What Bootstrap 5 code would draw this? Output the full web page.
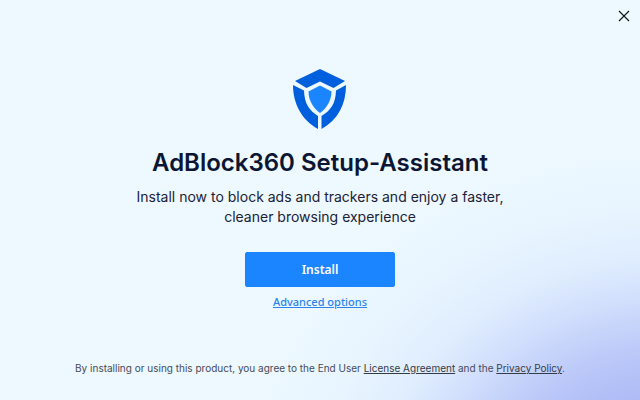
<!DOCTYPE html>
<html lang="en">
<head>
<meta charset="utf-8">
<meta name="viewport" content="width=device-width, initial-scale=1">
<title>AdBlock360 Setup-Assistant</title>
<link href="https://cdn.jsdelivr.net/npm/bootstrap@5.3.0/dist/css/bootstrap.min.css" rel="stylesheet">
<style>
body {
  font-family: Inter, "Liberation Sans", sans-serif;
  color: #1b2236;
  background: radial-gradient(ellipse 410px 330px at 105% 123%, #a9b7f6 0%, #adbaf6 28%, #b9c6f8 41%, #c6d3fa 51%, #d3e0fd 60%, #dfedfe 71%, #e8f5ff 86%, #edf8ff 105%) no-repeat #edf8ff;
}
.close-button { width: 32px; height: 32px; color: #0b1220; }
.setup-title { font-size: 24px; line-height: 34px; font-weight: 600; color: #0c1633; margin-bottom: 7px; }
.setup-intro { font-size: 14px; line-height: 20px; max-width: 400px; }
.action-font { font-family: "Noto Sans", "Open Sans", sans-serif; }
.install-button { --bs-btn-bg: #1a85ff; --bs-btn-border-color: #1a85ff; width: 150px; height: 35px; font-size: 12px; line-height: 16px; font-weight: 600; border-radius: 2px; margin-top: 25px; }
.advanced-link { font-size: 11px; line-height: 16px; font-weight: 500; color: #2b84ee; margin-top: 7px; }
.legal-text { font-size: 10px; line-height: 16px; color: #454b58; }
.legal-text a { color: #353b49; }
</style>
</head>
<body class="d-flex flex-column min-vh-100">
<header class="d-flex justify-content-end">
  <button type="button" class="close-button btn p-0 border-0 d-flex align-items-center justify-content-center" aria-label="Close">
    <svg width="12" height="12" viewBox="0 0 12 12" fill="none" stroke="currentColor" stroke-width="1.1" aria-hidden="true"><path d="M1 1l10 10M11 1L1 11"/></svg>
  </button>
</header>
<main class="flex-grow-1 d-flex flex-column align-items-center text-center pt-4 mt-2 px-3">
  <svg class="mt-1" width="54" height="62" viewBox="0 0 54 62" aria-hidden="true">
    <path fill="#005fdc" d="M27 1L52 13L40.500 20L27 13.500L13.500 20L2 13ZM0 17L11 22.500C11.500 36 16 42 25 48V61C9 52 0 36 0 17ZM53 17L43 22.500C42.500 36 38 42 28.500 48V61C45 52 53 36 53 17Z"/>
    <path fill="#1a85ff" d="M27 17.500L38.500 23.500C38.500 32 34 40 27 45C20 40 15.500 32 15.500 23.500Z"/>
  </svg>
  <h1 class="setup-title mt-3">AdBlock360 Setup-Assistant</h1>
  <p class="setup-intro mb-0">Install now to block ads and trackers and enjoy a faster, cleaner browsing experience</p>
  <button type="button" class="install-button action-font btn btn-primary p-0">Install</button>
  <a href="#advanced" class="advanced-link action-font">Advanced options</a>
</main>
<footer class="legal-text text-center px-3 pb-4">By installing or using this product, you agree to the End User <a href="#license">License Agreement</a> and the <a href="#privacy">Privacy Policy</a>.</footer>
<script src="https://cdn.jsdelivr.net/npm/bootstrap@5.3.0/dist/js/bootstrap.bundle.min.js"></script>
</body>
</html>
